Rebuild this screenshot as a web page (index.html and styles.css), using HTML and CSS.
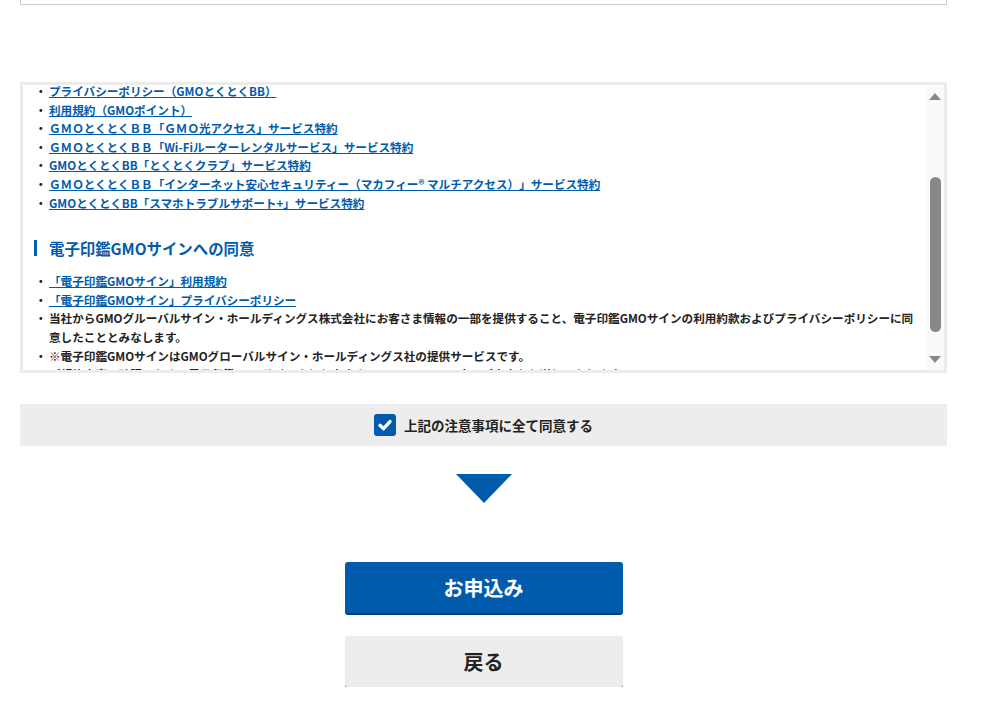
FILE: index.html
```html
<!DOCTYPE html>
<html lang="ja">
<head>
  <meta charset="utf-8">
  <title>お申込み内容の確認</title>
  <link rel="stylesheet" href="styles.css">
</head>
<body>
  <div class="page">
    <div class="prev-box"></div>

    <div class="terms">
      <div class="terms-body">
        <ul class="terms-list terms-list-first">
          <li><a href="#">プライバシーポリシー（GMOとくとくBB）</a></li>
          <li><a href="#">利用規約（GMOポイント）</a></li>
          <li><a href="#">ＧＭＯとくとくＢＢ「ＧＭＯ光アクセス」サービス特約</a></li>
          <li><a href="#">ＧＭＯとくとくＢＢ「Wi-Fiルーターレンタルサービス」サービス特約</a></li>
          <li><a href="#">GMOとくとくBB「とくとくクラブ」サービス特約</a></li>
          <li><a href="#">ＧＭＯとくとくＢＢ「インターネット安心セキュリティー（マカフィー® マルチアクセス）」サービス特約</a></li>
          <li><a href="#">GMOとくとくBB「スマホトラブルサポート+」サービス特約</a></li>
        </ul>

        <h3 class="terms-title">電子印鑑GMOサインへの同意</h3>

        <ul class="terms-list">
          <li><a href="#">「電子印鑑GMOサイン」利用規約</a></li>
          <li><a href="#">「電子印鑑GMOサイン」プライバシーポリシー</a></li>
          <li>当社からGMOグルーバルサイン・ホールディングス株式会社にお客さま情報の一部を提供すること、電子印鑑GMOサインの利用約款およびプライバシーポリシーに同意したこととみなします。</li>
          <li>※電子印鑑GMOサインはGMOグローバルサイン・ホールディングス社の提供サービスです。</li>
          <li>ご契約内容の確認のため、電子印鑑GMOサインよりお客さまのメールアドレス宛にご案内をお送りいたします。</li>
        </ul>
      </div>
      <div class="scrollbar">
        <span class="sb-up"></span>
        <span class="sb-thumb"></span>
        <span class="sb-down"></span>
      </div>
    </div>

    <label class="agree">
      <span class="agree-check">
        <svg width="22" height="22" viewBox="0 0 22 22">
          <path d="M6 11.3 L9.6 14.7 L16 7.6" fill="none" stroke="#fff" stroke-width="3.4" stroke-linecap="round" stroke-linejoin="round"/>
        </svg>
      </span>
      上記の注意事項に全て同意する
    </label>

    <div class="arrow-down"></div>

    <div class="actions">
      <a href="#" class="btn btn-primary">お申込み</a>
      <a href="#" class="btn btn-back">戻る</a>
    </div>
  </div>
</body>
</html>
```

FILE: styles.css
```css
body {
  margin: 0;
  padding: 0;
  font-family: "Noto Sans CJK JP", "Noto Sans", sans-serif;
  color: #222;
  background-color: #fff;
  text-spacing-trim: space-all;
}
.page {
  width: 927px;
  margin-left: 20px;
}
.prev-box {
  height: 4px;
  border: 1px solid #ccc;
  border-top: 0;
}

/* terms scroll box */
.terms {
  display: flex;
  height: 285px;
  margin-top: 77px;
  border: 3px solid #ececec;
}
.terms-body {
  flex: 1;
  overflow: hidden;
  padding-right: 6px;
}
.terms-list {
  list-style: none;
  margin: 0;
  padding: 0 0 0 12px;
  font-size: 11.6px;
  font-weight: bold;
  line-height: 18.6px;
}
.terms-list-first {
  margin-top: -3px;
}
.terms-list li {
  display: flex;
}
.terms-list li::before {
  content: "・";
  flex: none;
  width: 14px;
}
.terms-list a {
  color: #005bac;
  text-decoration: underline;
}
.terms-title {
  display: flex;
  align-items: center;
  gap: 12px;
  height: 25px;
  margin: 23px 0 12px 11px;
  font-size: 15.4px;
  font-weight: bold;
  color: #005bac;
}
.terms-title::before {
  content: "";
  width: 3px;
  height: 16px;
  background-color: #005bac;
}
.scrollbar {
  display: flex;
  flex-direction: column;
  align-items: center;
  width: 18px;
  padding: 8px 0 7px;
  box-sizing: border-box;
  background-color: #fafafa;
}
.sb-up {
  border-left: 6px solid transparent;
  border-right: 6px solid transparent;
  border-bottom: 7px solid #888;
}
.sb-thumb {
  width: 11px;
  height: 155px;
  margin: 77px 0 0 1px;
  border-radius: 6px;
  background-color: #888;
}
.sb-down {
  margin-top: auto;
  border-left: 6px solid transparent;
  border-right: 6px solid transparent;
  border-top: 7px solid #888;
}

/* agree */
.agree {
  display: flex;
  align-items: center;
  justify-content: center;
  gap: 8px;
  height: 42px;
  margin-top: 31px;
  background-color: #ededed;
  font-size: 13.5px;
  font-weight: bold;
  color: #222;
}
.agree-check {
  display: flex;
  width: 22px;
  height: 22px;
  border-radius: 3px;
  background-color: #005bac;
}
.arrow-down {
  width: 0;
  height: 0;
  margin: 28px auto 0;
  border-left: 28.5px solid transparent;
  border-right: 28.5px solid transparent;
  border-top: 29px solid #005bac;
}

/* buttons */
.actions {
  display: flex;
  flex-direction: column;
  align-items: center;
  gap: 23px;
  margin-top: 59px;
}
.btn {
  display: flex;
  align-items: center;
  justify-content: center;
  width: 278px;
  height: 51px;
  border-radius: 3px;
  font-size: 20px;
  font-weight: bold;
  text-decoration: none;
}
.btn-primary {
  background-color: #005bac;
  color: #fff;
  box-shadow: 0 2px 0 #00427e;
}
.btn-back {
  background-color: #ededed;
  color: #222;
  box-shadow: 0 2px 0 #9a9a9a;
}
```
